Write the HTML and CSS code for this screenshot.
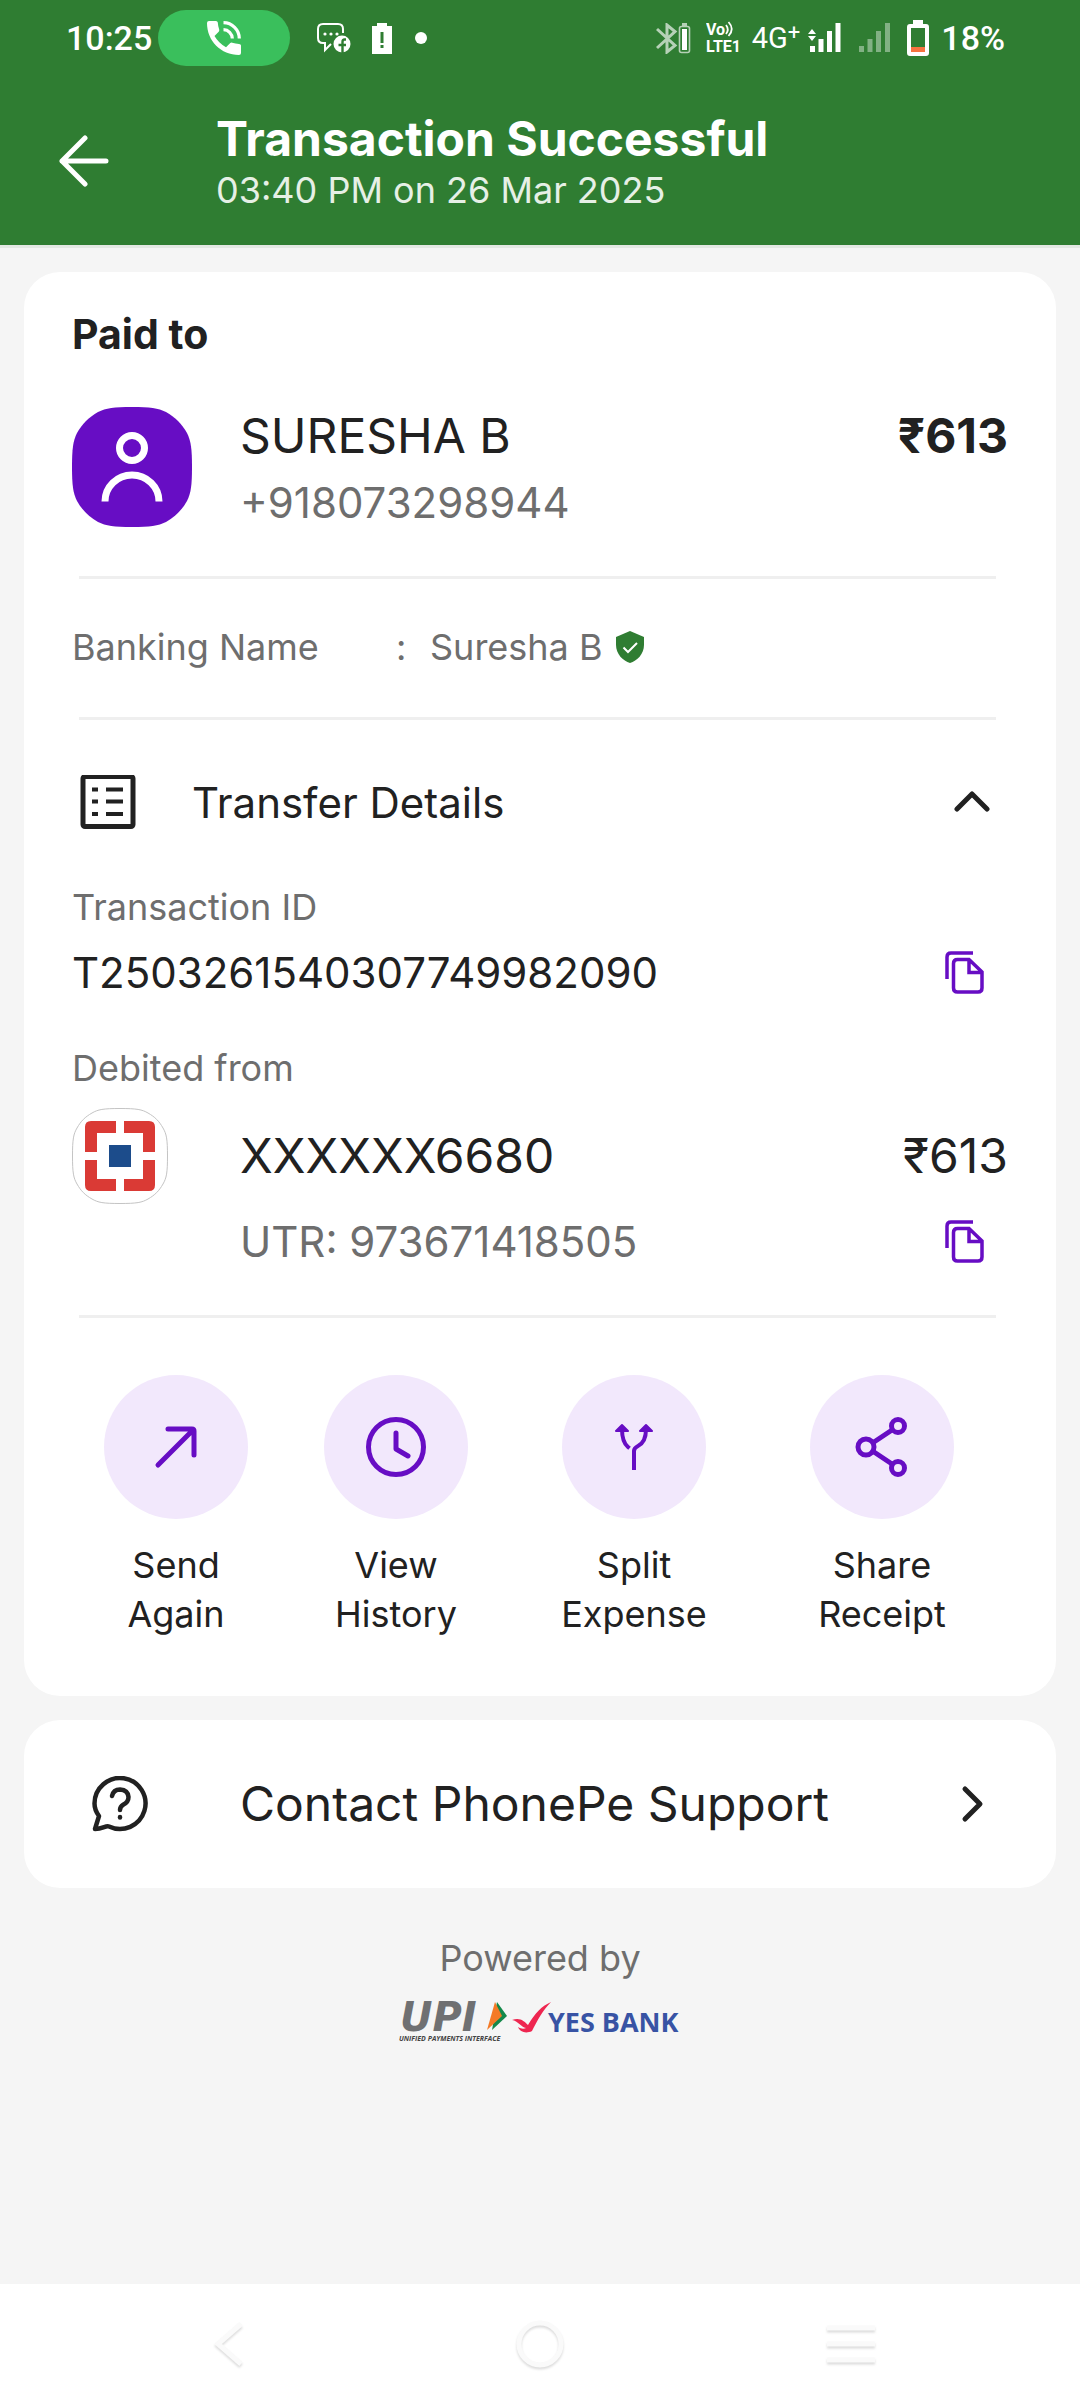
FILE: index.html
```html
<!DOCTYPE html>
<html lang="en">
<head>
<meta charset="utf-8">
<meta name="viewport" content="width=device-width, initial-scale=1">
<title>Transaction Successful</title>
<link rel="stylesheet" href="styles.css">
</head>
<body>
<header class="top">
  <div class="status">
    <span class="clock">10:25</span>
    <span class="call-pill">
      <svg width="34" height="34" viewBox="0 0 34 34" fill="none">
        <path d="M2 0H9Q10.500 0 10.800 1.500Q11 5 12.200 8.600Q12.500 9.800 11.700 10.700L7.500 15Q11.500 22 19 26.300L23.300 22Q24 21.300 25.200 21.700Q28.500 22.700 32 22.900Q34 23 34 24.600V32Q34 34 32 34C14 34 0 20 0 2Q0 0 2 0Z" fill="#fff"/>
        <path d="M16.500 1.700A16 16 0 0 1 32.300 17.500M16.500 8.700A9 9 0 0 1 25.300 17.500" stroke="#fff" stroke-width="3.200"/>
      </svg>
    </span>
    <svg class="chat" width="34" height="30" viewBox="0 0 34 30" fill="none">
      <path d="M26 10V6Q26 1 21 1H6Q1 1 1 6V15Q1 20 6 20H8V27L14 21" stroke="#fff" stroke-width="2"/>
      <circle cx="8" cy="11" r="1.600" fill="#fff"/><circle cx="14" cy="11" r="1.600" fill="#fff"/><circle cx="20" cy="11" r="1.600" fill="#fff"/>
      <circle cx="25" cy="21" r="8.500" fill="#fff"/>
      <path d="M29 16.500H27.500Q25.500 16.500 25.500 19V30M21.500 22H29" stroke="#2f7d32" stroke-width="2.400"/>
    </svg>
    <svg class="alert" width="20" height="31" viewBox="0 0 20 31"><path d="M0 3H5V0H15V3H20V31H0Z" fill="#fff"/><path d="M8.500 9H11.500V20H8.500ZM8.500 22H11.500V25H8.500Z" fill="#2f7d32"/></svg>
    <svg class="dot" width="12" height="12" viewBox="0 0 12 12"><circle cx="6" cy="6" r="6" fill="#fff"/></svg>
    <svg class="bluetooth" width="35" height="31" viewBox="0 0 35 31" fill="none">
      <g opacity=".65"><path d="M1 6L19 22.500L11 29V2L19 8.500L1 25" stroke="#fff" stroke-width="3"/>
      <rect x="23.500" y="3.500" width="10" height="26" rx="2" stroke="#fff" stroke-width="1.600"/><path d="M26 0H31V3H26Z" fill="#fff"/></g>
      <path d="M26 6H31V27H26Z" fill="#fff"/>
    </svg>
    <svg class="volte" width="36" height="40" viewBox="0 0 36 40" fill="none">
      <text class="svg-tech" x="0" y="17">Vo</text>
      <path d="M20 7Q23.500 11.500 20 16M22.500 4Q29 11 22.500 18" stroke="#fff" stroke-width="1.800"/>
      <text class="svg-tech" x="0" y="34">LTE1</text>
    </svg>
    <span class="net">4G<sup class="plus">+</sup></span>
    <svg class="signal" width="33" height="30" viewBox="0 0 33 30" fill="#fff"><path d="M2 23H7V29H2ZM10.500 16H15.500V29H10.500ZM19 8H24V29H19ZM27.500 0H32.500V29H27.500ZM0 11L4 6L8 11ZM0 13H8L4 18Z"/></svg>
    <svg class="signal-off" width="31" height="30" viewBox="0 0 31 30" fill="#82b184"><path d="M0 23H5V29H0ZM8.500 16H13.500V29H8.500ZM17 8H22V29H17ZM26 0H31V29H26Z"/></svg>
    <svg class="battery" width="22" height="36" viewBox="0 0 22 36"><path d="M3 4H6V0H16V4H19Q22 4 22 7V33Q22 36 19 36H3Q0 36 0 33V7Q0 4 3 4Z" fill="#fff"/><path d="M4 8H18V27H4Z" fill="#2f7d32"/><path d="M4 27H18V32H4Z" fill="#f77340"/></svg>
    <span class="percent">18%</span>
  </div>
  <div class="appbar">
    <button class="icon-btn back" aria-label="Back">
      <svg width="50" height="52" viewBox="0 0 50 52" fill="none" stroke="#fff" stroke-width="5" stroke-linecap="round" stroke-linejoin="round"><path d="M26 3L3 26L26 49M3 26H47"/></svg>
    </button>
    <div>
      <h1 class="title">Transaction Successful</h1>
      <p class="time">03:40 PM on 26 Mar 2025</p>
    </div>
  </div>
</header>

<main class="content">
  <section class="card receipt">
    <h2 class="paid">Paid to</h2>
    <div class="payee">
      <svg class="avatar" width="120" height="120" viewBox="0 0 120 120" fill="none">
        <path d="M60 0C78 0 86 1 94 5C103 10 110 17 115 26C119 34 120 42 120 60C120 78 119 86 115 94C110 103 103 110 94 115C86 119 78 120 60 120C42 120 34 119 26 115C17 110 10 103 5 94C1 86 0 78 0 60C0 42 1 34 5 26C10 17 17 10 26 5C34 1 42 0 60 0Z" fill="#670dc4"/>
        <g stroke="#fff" stroke-width="7"><circle cx="60" cy="41" r="12.500"/><path d="M33 94.500A27 26.500 0 0 1 87 94.500"/></g>
      </svg>
      <div class="who">
        <p class="large">SURESHA B</p>
        <p class="medium muted">+918073298944</p>
      </div>
      <p class="large strong">₹613</p>
    </div>
    <hr class="rule">
    <div class="bank-name">
      <span class="bank-label">Banking Name</span>
      <span class="colon">:</span>
      <span>Suresha B</span>
      <svg class="shield" width="30" height="34" viewBox="0 0 30 34" fill="none"><path d="M15 1L29 7V15C29 24 22 31 15 33C8 31 1 24 1 15V7Z" fill="#2f7d32"/><path d="M8.500 17.500L13 22L22 13" stroke="#fff" stroke-width="2"/></svg>
    </div>
    <hr class="rule">
    <button class="details-toggle" aria-expanded="true">
      <svg width="56" height="56" viewBox="0 0 56 56" fill="none" stroke="#212121" stroke-width="5"><rect x="3" y="1.500" width="50" height="50" rx="2"/><path d="M12 14.500H18M26 14.500H43M12 26.500H18M26 26.500H43M12 39H18M26 39H43" stroke-width="4"/></svg>
      <span class="grow">Transfer Details</span>
      <svg width="36" height="24" viewBox="0 0 36 24" fill="none" stroke="#212121" stroke-width="5" stroke-linecap="round" stroke-linejoin="round"><path d="M3 18L18 3L33 18"/></svg>
    </button>
    <p class="small muted txn-label">Transaction ID</p>
    <div class="line txn">
      <p class="medium grow">T2503261540307749982090</p>
      <button class="icon-btn copy" aria-label="Copy transaction ID">
        <svg width="40" height="44" viewBox="0 0 40 44" fill="none" stroke="#670dc4" stroke-width="3.500"><path d="M2 28V6Q2 2 6 2H28M12.500 8.500H24L37 21V37Q37 41 33 41H12.500Q8.500 41 8.500 37V12.500Q8.500 8.500 12.500 8.500ZM24 8.500V21.500H37"/></svg>
      </button>
    </div>
    <p class="small muted debit-label">Debited from</p>
    <div class="line account">
      <svg class="bank-logo" width="96" height="96" viewBox="0 0 96 96" fill="none">
        <path d="M48 .5C65 .5 70 1.500 76 5C83 9 87 13 91 20C94.500 26 95.500 31 95.500 48C95.500 65 94.500 70 91 76C87 83 83 87 76 91C70 94.500 65 95.500 48 95.500C31 95.500 26 94.500 20 91C13 87 9 83 5 76C1.500 70 .5 65 .5 48C.5 31 1.500 26 5 20C9 13 13 9 20 5C26 1.500 31 .5 48 .5Z" stroke="#c4c4c4"/>
        <path d="M13 44V19Q13 13 19 13H44V25H25V44ZM52 13H77Q83 13 83 19V44H71V25H52ZM13 52H25V71H44V83H19Q13 83 13 77ZM71 52H83V77Q83 83 77 83H52V71H71Z" fill="#da3a35"/>
        <path d="M37 37H59V59H37Z" fill="#1c4c8b"/>
      </svg>
      <p class="large grow">XXXXXX6680</p>
      <p class="large">₹613</p>
    </div>
    <div class="line utr">
      <p class="medium muted grow">UTR: 973671418505</p>
      <button class="icon-btn copy" aria-label="Copy UTR">
        <svg width="40" height="44" viewBox="0 0 40 44" fill="none" stroke="#670dc4" stroke-width="3.500"><path d="M2 28V6Q2 2 6 2H28M12.500 8.500H24L37 21V37Q37 41 33 41H12.500Q8.500 41 8.500 37V12.500Q8.500 8.500 12.500 8.500ZM24 8.500V21.500H37"/></svg>
      </button>
    </div>
    <hr class="rule">
    <div class="actions">
      <button class="action">
        <span class="disc"><svg width="60" height="60" viewBox="0 0 60 60"><path d="M12 48L47 13M22 12H46Q48 12 48 14V38"/></svg></span>
        <span>Send<br>Again</span>
      </button>
      <button class="action">
        <span class="disc"><svg width="60" height="60" viewBox="0 0 60 60"><circle cx="30" cy="30" r="27.500"/><path d="M30 16V32L42 39"/></svg></span>
        <span>View<br>History</span>
      </button>
      <button class="action">
        <span class="disc"><svg width="60" height="60" viewBox="0 0 60 60"><path d="M30 51V34Q30 31 34 29Q42 25 42 12M18 12Q18 25 24 30" stroke-width="4" stroke-linecap="square"/><path d="M12 14L18 8L24 14ZM36 14L42 8L48 14Z" fill="#670dc4" stroke-width="2"/></svg></span>
        <span>Split<br>Expense</span>
      </button>
      <button class="action">
        <span class="disc"><svg width="60" height="60" viewBox="0 0 60 60"><circle cx="14" cy="30" r="8"/><circle cx="46" cy="9" r="6.500"/><circle cx="46" cy="51" r="6.500"/><path d="M22 25L40 13M22 35L40 47"/></svg></span>
        <span>Share<br>Receipt</span>
      </button>
    </div>
  </section>

  <a class="card support" href="#support">
    <svg width="56" height="56" viewBox="0 0 56 56" fill="none" stroke="#212121" stroke-width="4.500" stroke-linecap="round" stroke-linejoin="round">
      <path d="M3 53L7 40C4 36 2.500 32 2.500 27.500A25.500 25.500 0 1 1 17 50.500C14 49 11 53 3 53Z"/>
      <path d="M20 20Q21.500 13.500 28 13.500Q36 14 36.500 21Q36.500 26 31.500 28.500Q28 30.500 28 34"/><path d="M28 41V41.500"/>
    </svg>
    <span class="grow">Contact PhonePe Support</span>
    <svg width="24" height="38" viewBox="0 0 24 38" fill="none" stroke="#212121" stroke-width="5" stroke-linecap="round" stroke-linejoin="round"><path d="M5 4L20 19L5 34"/></svg>
  </a>

  <footer class="powered">
    <p class="small muted">Powered by</p>
    <div class="logos">
      <svg width="109" height="52" viewBox="0 0 109 52">
        <text class="svg-upi" x="1" y="39">UPI</text>
        <path d="M98 10L108 24L93 38Z" fill="#13884a"/><path d="M96 10L103 24L88 38Z" fill="#f47a26"/>
        <text class="svg-upi-sub" x="0" y="49">UNIFIED PAYMENTS INTERFACE</text>
      </svg>
      <svg width="170" height="52" viewBox="0 0 170 52">
        <path d="M0 28C8 25 12 29 16 33C23 21 30 14 39 10C31 18 25 29 20 39C14 42 8 40 6 35C9 37 12 37 14 36C9 35 6 29 0 28Z" fill="#ee2650"/>
        <text class="svg-yes" x="36" y="40">YES BANK</text>
      </svg>
    </div>
  </footer>
</main>

<nav class="sysnav">
  <button class="icon-btn" aria-label="System back"><svg width="50" height="50" viewBox="0 0 50 50"><path d="M37 5L14 25L37 45"/></svg></button>
  <button class="icon-btn" aria-label="Home"><svg width="50" height="50" viewBox="0 0 50 50"><circle cx="25" cy="25" r="21"/></svg></button>
  <button class="icon-btn" aria-label="Recent apps"><svg width="50" height="50" viewBox="0 0 50 50"><path d="M1 9H49M1 25H49M1 41H49"/></svg></button>
</nav>
</body>
</html>
```
FILE: styles.css
```css
* {
  box-sizing: border-box;
}

body {
  margin: 0;
  min-height: 100vh;
  display: flex;
  flex-direction: column;
  background: #f5f5f5;
  color: #212121;
  font-family: Inter, "Liberation Sans", sans-serif;
  font-size: 36px;
  line-height: 44px;
}

h1, h2, p {
  margin: 0;
}

svg {
  display: block;
  flex: none;
}

button {
  margin: 0;
  padding: 0;
  border: 0;
  background: none;
  color: inherit;
  font: inherit;
}

.icon-btn {
  display: flex;
}

.grow {
  flex: 1;
}

.muted {
  color: #6e6e6e;
}

.small {
  font-size: 36px;
  line-height: 44px;
}

.medium {
  font-size: 42px;
  line-height: 50px;
}

.large {
  font-size: 48px;
  line-height: 56px;
}

.strong {
  font-weight: 700;
}

/* Header */

.top {
  background: #2f7d32;
  color: #fff;
  border-bottom: 3px solid #e3e8e3;
}

.status {
  display: flex;
  align-items: center;
  height: 76px;
  padding: 0 75px 0 66px;
  font-family: Roboto, sans-serif;
  font-size: 34px;
  font-weight: 500;
  line-height: 40px;
}

.call-pill {
  display: flex;
  align-items: center;
  justify-content: center;
  width: 132px;
  height: 56px;
  margin-left: 6px;
  border-radius: 28px;
  background: #3abf5c;
}

.chat {
  margin-left: 27px;
}

.alert {
  margin-left: 21px;
}

.dot {
  margin-left: 23px;
}

.bluetooth {
  margin-left: auto;
}

.volte {
  margin-left: 15px;
}

.net {
  margin-left: 10px;
  font-size: 29px;
  font-weight: 400;
}

.plus {
  font-size: 22px;
  line-height: 0;
  vertical-align: 8px;
}

.signal {
  margin-left: 8px;
}

.signal-off {
  margin-left: 18px;
}

.battery {
  margin-left: 17px;
}

.percent {
  margin-left: 12px;
}

.svg-tech {
  font: 700 16px Roboto, sans-serif;
  fill: #fff;
}

.appbar {
  display: flex;
  align-items: center;
  gap: 107px;
  padding: 34px 59px 33px;
}

.title {
  font-size: 48px;
  font-weight: 700;
  line-height: 58px;
}

.time {
  color: #e6f0e6;
}

/* Cards */

.content {
  flex: 1;
  padding: 24px;
}

.card {
  border-radius: 36px;
  background: #fff;
}

.receipt {
  padding: 38px 48px 57px;
}

.paid {
  font-size: 41px;
  font-weight: 700;
  line-height: 48px;
}

.payee {
  display: flex;
  align-items: flex-start;
  margin-top: 49px;
}

.payee .large {
  padding-top: 1px;
}

.who {
  display: grid;
  flex: 1;
  gap: 14px;
  margin-left: 48px;
}

.rule {
  height: 3px;
  margin: 48px 12px 0 7px;
  border: 0;
  background: #efefef;
}

.bank-name {
  display: flex;
  align-items: center;
  margin: 46px 0 48px;
  color: #6e6e6e;
}

.bank-name + .rule {
  margin-top: 0;
}

.bank-label {
  width: 324px;
}

.colon {
  width: 34px;
}

.shield {
  margin-left: 12px;
}

.details-toggle {
  display: flex;
  align-items: center;
  gap: 56px;
  width: 100%;
  margin-top: 55px;
  padding: 0 18px 0 8px;
  font-size: 42px;
  line-height: 48px;
  text-align: left;
}

.line {
  display: flex;
  align-items: center;
}

.txn-label {
  margin-top: 54px;
}

.txn {
  margin-top: 19px;
}

.copy {
  margin-right: 23px;
}

.debit-label {
  margin-top: 48px;
}

.account {
  margin-top: 18px;
}

.bank-logo {
  margin-right: 72px;
}

.utr {
  margin-top: 13px;
  padding-left: 168px;
}

.actions {
  display: grid;
  grid-template-columns: 208fr 232fr 244fr 252fr;
  margin-top: 57px;
}

.action {
  display: flex;
  flex-direction: column;
  align-items: center;
  gap: 22px;
  line-height: 49px;
}

.disc {
  display: flex;
  align-items: center;
  justify-content: center;
  width: 144px;
  height: 144px;
  border-radius: 50%;
  background: #f2e8fc;
}

.disc svg {
  fill: none;
  stroke: #670dc4;
  stroke-width: 5;
  stroke-linecap: round;
  stroke-linejoin: round;
}

.support {
  display: flex;
  align-items: center;
  height: 168px;
  margin-top: 24px;
  padding: 0 72px 0 68px;
  gap: 92px;
  color: inherit;
  font-size: 48px;
  line-height: 56px;
  text-decoration: none;
}

/* Footer */

.powered {
  display: flex;
  flex-direction: column;
  align-items: center;
  gap: 12px;
  margin-top: 48px;
}

.logos {
  display: flex;
  gap: 4px;
}

.svg-upi {
  font: italic 700 40px "DejaVu Sans", sans-serif;
  fill: #6f7072;
}

.svg-upi-sub {
  font: italic 700 7px "Open Sans", sans-serif;
  fill: #444;
}

.svg-yes {
  font: 700 27px "Open Sans", sans-serif;
  fill: #3853a4;
}

.sysnav {
  display: flex;
  align-items: center;
  justify-content: space-between;
  height: 116px;
  padding: 4px 204px 0;
  background: #fff;
}

.sysnav svg {
  fill: none;
  stroke: #fafafa;
  stroke-width: 5;
  filter: drop-shadow(0 2px 1px #dcdcdc);
}
```
